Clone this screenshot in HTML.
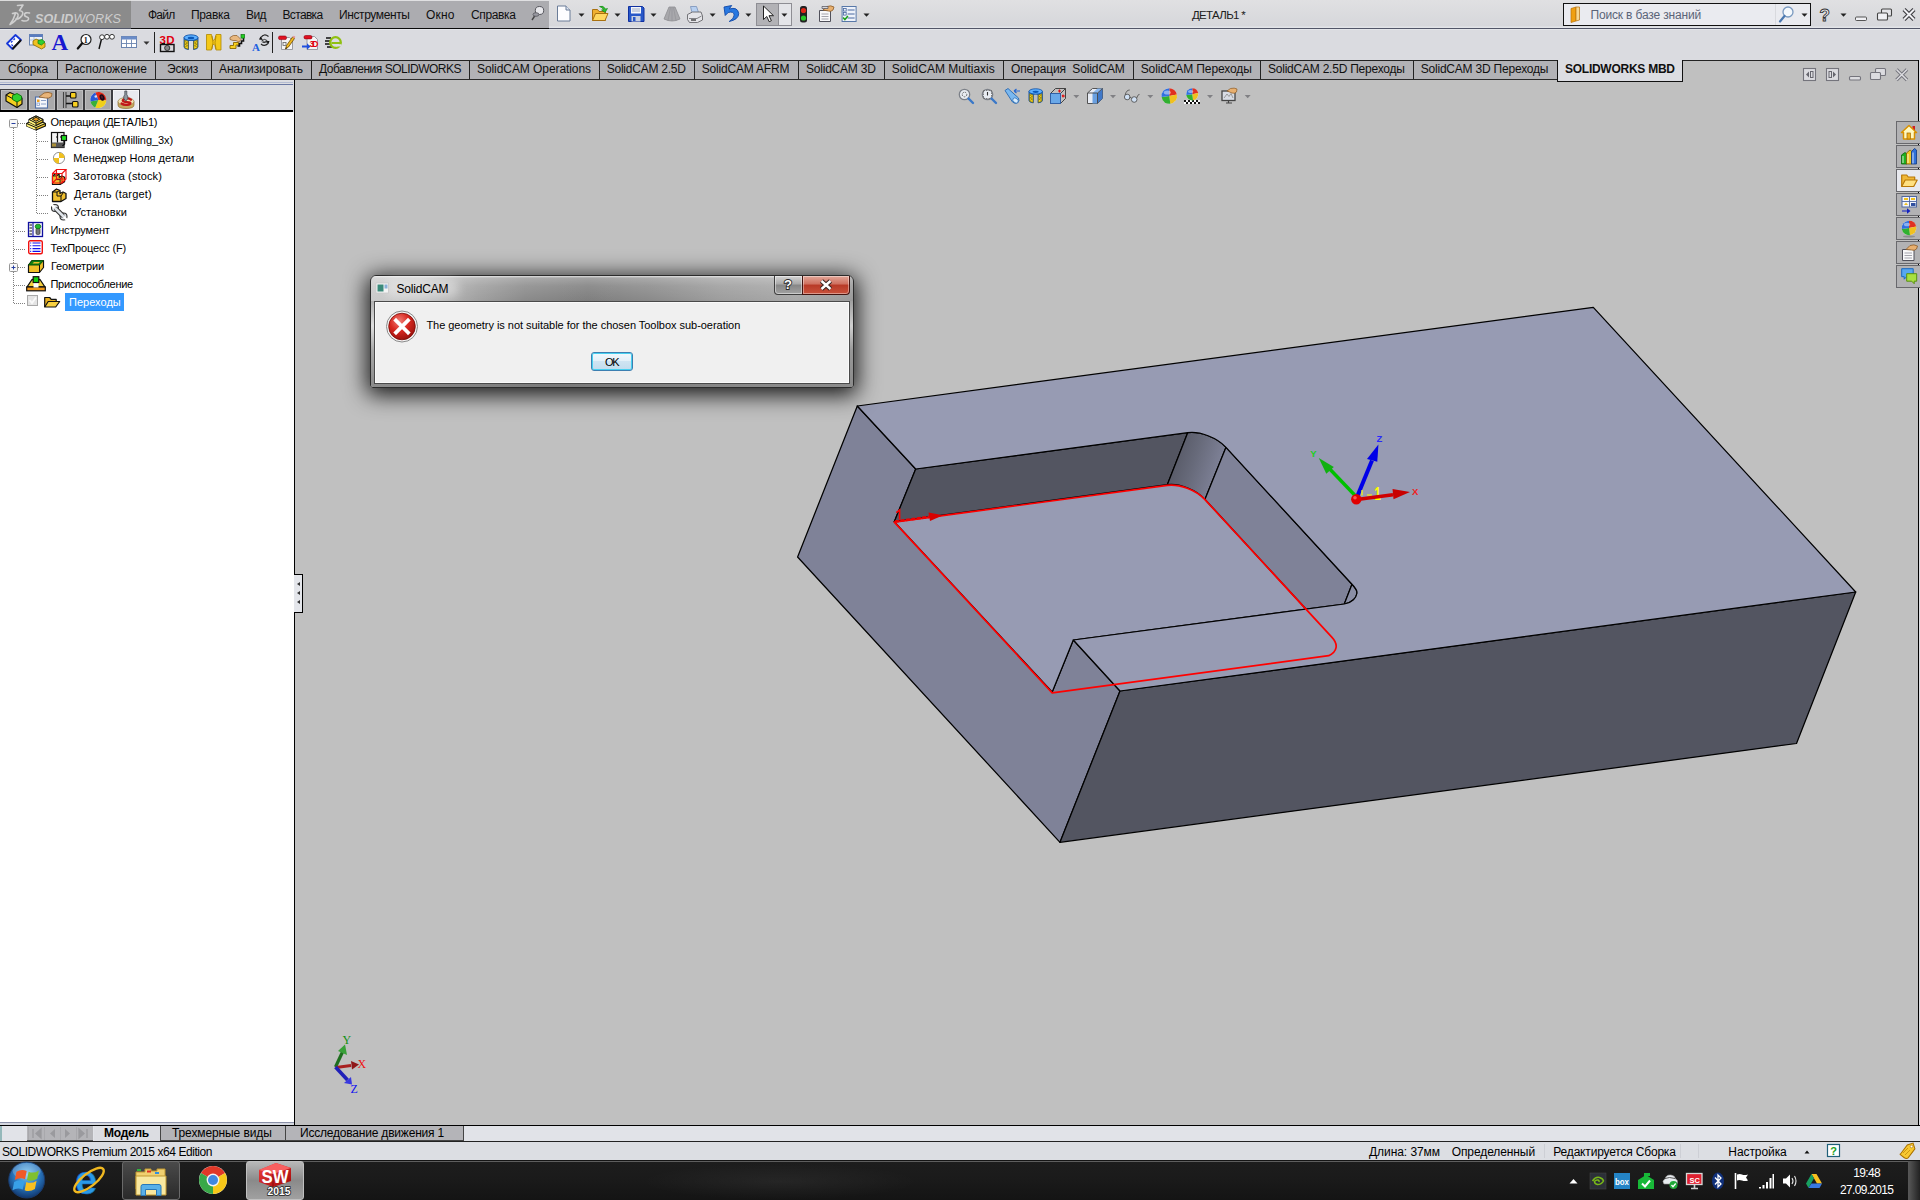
<!DOCTYPE html>
<html><head><meta charset="utf-8"><title>SOLIDWORKS Premium 2015</title>
<style>
*{box-sizing:border-box;margin:0;padding:0}
html,body{width:1920px;height:1200px;overflow:hidden;background:#c0c0c0;font-family:"Liberation Sans",sans-serif;font-size:12px;color:#000}
.a{position:absolute}
.t{position:absolute;white-space:nowrap;line-height:16px;height:16px}
.tab{position:absolute;top:61px;height:19px;border-right:1px solid #222;border-bottom:1px solid #2a2a2a;}
.lt{position:absolute;top:89px;height:21px;width:28px;background:#a9a9ab;border:1px solid #3e3e42;border-bottom:none;box-shadow:inset 0 0 0 1px #bebec0}
.bt{position:absolute;top:1126px;height:15px;background:#b4b4b8;border:1px solid #444;border-top:none}
.rt{position:absolute;left:1896px;width:24px;height:23px;background:#b2b2b4;border:1px solid #68686c;border-right:none}

</style></head><body>
<div class="a" style="left:0;top:0;width:1920px;height:28px;background:linear-gradient(#e0e0e2,#d6d7db 26px,#e2e4e8 27px)"></div>
<div class="a" style="left:131px;top:0;width:418px;height:28px;background:#acacb0;border-top:1px solid #e0e0e2"></div>
<div class="a" style="left:0;top:0;width:131px;height:28px;background:#8b8b8b;border-top:1px solid #dcdcdc"></div>
<div class="a" style="left:0;top:28px;width:1920px;height:1px;background:#525668"></div>
<div class="a" style="left:131px;top:28px;width:418px;height:1px;background:#0a0a0a"></div>
<div class="a" style="left:0;top:29px;width:1920px;height:31px;background:linear-gradient(#e4e6ea 0,#e4e6ea 1px,#dadbe0 1px)"></div>
<div class="a" style="left:0;top:60px;width:1920px;height:1px;background:#222"></div>
<div class="a" style="left:0;top:61px;width:1558px;height:19px;background:#b2b2b6"></div>
<div class="tab" style="left:0px;width:58px"></div>
<div class="tab" style="left:57px;width:99px"></div>
<div class="tab" style="left:155px;width:57px"></div>
<div class="tab" style="left:211px;width:101px"></div>
<div class="tab" style="left:311px;width:159px"></div>
<div class="tab" style="left:469px;width:131px"></div>
<div class="tab" style="left:599px;width:96px"></div>
<div class="tab" style="left:694px;width:105px"></div>
<div class="tab" style="left:798px;width:87px"></div>
<div class="tab" style="left:884px;width:120px"></div>
<div class="tab" style="left:1003px;width:131px"></div>
<div class="tab" style="left:1133px;width:128px"></div>
<div class="tab" style="left:1260px;width:154px"></div>
<div class="tab" style="left:1413px;width:145px"></div>
<div class="a" style="left:1557px;top:60px;width:126px;height:22px;background:#dcdde2;border:1px solid #111;border-top:none"></div>
<div class="a" style="left:0;top:80px;width:295px;height:1046px;background:#dcdde2"></div>
<div class="a" style="left:0;top:82px;width:293px;height:1px;background:#b4bcd2"></div>
<div class="a" style="left:0;top:84px;width:293px;height:1px;background:#6a78a4"></div>
<div class="lt" style="left:0px"></div>
<div class="lt" style="left:28px"></div>
<div class="lt" style="left:56px"></div>
<div class="lt" style="left:84px"></div>
<div class="a" style="left:112px;top:89px;width:28px;height:22px;background:#e9eaef;border:1px solid #3e3e42;border-bottom:none;box-shadow:inset 0 0 0 1px #f6f6f8"></div>
<div class="a" style="left:0;top:110px;width:293px;height:2px;background:#000"></div>
<div class="a" style="left:0;top:112px;width:294px;height:1013px;background:#fff"></div>
<div class="a" style="left:294px;top:80px;width:1px;height:1046px;background:#000"></div>
<svg class="a" style="left:295px;top:80px" width="1623" height="1045" viewBox="295 80 1623 1045">
<defs><linearGradient id="gf1" x1="1172" y1="455" x2="1220" y2="470" gradientUnits="userSpaceOnUse"><stop offset="0" stop-color="#565865"/><stop offset="0.45" stop-color="#676a7a"/><stop offset="1" stop-color="#7f8298"/></linearGradient></defs><g>
<path d="M857.3 406 L915.7 469 L894.3 521.7 L1052.2 692 L1073.3 640 L1120 691 L1060 842.3 L797.6 557 Z" fill="#7f8298" stroke="#000" stroke-width="1.25" stroke-linejoin="round"/>
<path d="M1120 691 L1855.7 592 L1796.5 743.5 L1060 842.3 Z" fill="#535561" stroke="#000" stroke-width="1.25" stroke-linejoin="round"/>
<path d="M894.3 521.7 L1167.3 484.7 C1179.2 483.1 1196.1 489.6 1205 499.3 L1306 609 L1073.3 640 L1052.2 692 Z" fill="#979bb3" stroke="#000" stroke-width="1.25" stroke-linejoin="round"/>
<path d="M915.7 469 L1187.7 432.7 L1167.3 484.7 L894.3 521.7 Z" fill="#535561" stroke="#000" stroke-width="1.25" stroke-linejoin="round"/>
<path d="M1187.7 432.7 C1199.9 431.0 1217.1 437.6 1226 447.3 L1205 499.3 C1196.1 489.6 1179.2 483.1 1167.3 484.7 Z" fill="url(#gf1)" stroke="#000" stroke-width="1.25" stroke-linejoin="round"/>
<path d="M1226 447.3 L1352 584.3 L1344.3 604 L1306 609 L1205 499.3 Z" fill="#7f8298" stroke="#000" stroke-width="1.25" stroke-linejoin="round"/>
<path d="M1352 584.3 C1355.5 588 1357.6 591 1356.9 593.5 C1356.3 597.5 1352.5 602.5 1344.3 604 Z" fill="#8a8ea5" stroke="#000" stroke-width="1.25" stroke-linejoin="round"/>
<path d="M857.3 406 L1593.3 307.3 L1855.7 592 L1120 691 L1073.3 640 L1344.3 604 C1352.5 602.5 1356.3 597.5 1356.9 593.5 C1357.6 591 1355.5 588 1352 584.3 L1226 447.3 C1217.1 437.6 1199.9 431.0 1187.7 432.7 L915.7 469 Z" fill="#979bb3" stroke="#000" stroke-width="1.25" stroke-linejoin="round"/>
<path d="M894.3 522.2 L1167.3 485.3 C1179.2 483.7 1196.1 490.1 1205 499.7 L1332 637.3 C1338.6 644.4 1337.3 651.4 1328.7 655.7 L1052.2 692.8 Z" fill="none" stroke="#ff0000" stroke-width="1.7" stroke-linejoin="round"/>
<path d="M895 521.5 L930 516.8" stroke="#f00000" stroke-width="2.6" stroke-dasharray="4 1.5"/><path d="M928.5 512.5 L943 515.3 L930 521 Z" fill="#d80000"/>
<path d="M896.3 512.6 L899.6 510 L899.6 519.5" stroke="#ff0000" stroke-width="1.6" fill="none"/>
<path d="M1357 497.5 L1330 469.3" stroke="#00c000" stroke-width="3.4"/><path d="M1318.8 458 L1333.8 467 L1326.3 473.8 Z" fill="#10b010"/>
<path d="M1357 497 L1372 460.5" stroke="#0000e8" stroke-width="4"/><path d="M1378.4 444.4 L1377.3 461.8 L1367 459.1 Z" fill="#0000e8"/>
<text x="1374.3" y="500" font-size="19" fill="#ffff00" font-family="Liberation Sans,sans-serif" font-weight="bold" textLength="6.5" lengthAdjust="spacingAndGlyphs">1</text><path d="M1362 490 v5.5 M1367 495 h5" stroke="#ffff00" stroke-width="1.2"/>
<path d="M1357 499.5 L1393 494.8" stroke="#d00000" stroke-width="3.6"/><path d="M1410 492.1 L1393.5 499.2 L1392.5 489 Z" fill="#c80000"/>
<circle cx="1356.3" cy="499.3" r="5.2" fill="#e00000"/><circle cx="1355" cy="497.8" r="1.8" fill="#ff5050"/>
<text x="1376.6" y="442" font-size="9.5" fill="#2828ff" font-family="Liberation Sans,sans-serif" font-weight="bold">Z</text>
<text x="1310.3" y="457" font-size="9.5" fill="#20d020" font-family="Liberation Sans,sans-serif" font-weight="bold">Y</text>
<text x="1412" y="495.2" font-size="9.5" fill="#f02020" font-family="Liberation Sans,sans-serif" font-weight="bold">X</text>
</g></svg>
<div class="a" style="left:294px;top:574px;width:9px;height:39px;background:#e4e6eb;border:1px solid #000;border-left:none"></div>
<div class="a" style="left:297px;top:582.0px;width:0;height:0;border-top:2.5px solid transparent;border-bottom:2.5px solid transparent;border-right:3.5px solid #333"></div>
<div class="a" style="left:297px;top:591.0px;width:0;height:0;border-top:2.5px solid transparent;border-bottom:2.5px solid transparent;border-right:3.5px solid #333"></div>
<div class="a" style="left:297px;top:600.0px;width:0;height:0;border-top:2.5px solid transparent;border-bottom:2.5px solid transparent;border-right:3.5px solid #333"></div>
<div class="a" style="left:65px;top:293px;width:59px;height:18px;background:#3399ff"></div>
<div class="a" style="left:1918px;top:60px;width:1px;height:1066px;background:#000"></div>
<div class="a" style="left:1919px;top:60px;width:1px;height:1066px;background:#dcdde2"></div>
<div class="a" style="left:0;top:1125px;width:1920px;height:1px;background:#000"></div>
<div class="a" style="left:0;top:1126px;width:1920px;height:16px;background:#e1e3e8"></div>
<div class="a" style="left:27px;top:1126px;width:66px;height:15px;background:#b4b4b8;border-bottom:1px solid #555"></div>
<div class="a" style="left:94px;top:1126px;width:67px;height:15px;background:#dcdde2"></div>
<div class="a" style="left:0;top:1126px;width:2px;height:15px;background:#94b8ba"></div>
<div class="a" style="left:0;top:1122px;width:294px;height:1px;background:#8a90a8"></div>
<div class="a" style="left:0;top:1123px;width:294px;height:2px;background:#d4d7df"></div>
<div class="bt" style="left:160px;width:126px"></div><div class="bt" style="left:285px;width:179px"></div>
<div class="a" style="left:0;top:1141px;width:1920px;height:1px;background:#222"></div>
<div class="a" style="left:0;top:1142px;width:1920px;height:18px;background:#dcdee3"></div>
<div class="a" style="left:1544px;top:1144px;width:1px;height:14px;background:#cdcfd5"></div>
<div class="a" style="left:1680px;top:1144px;width:1px;height:14px;background:#cdcfd5"></div>
<div class="a" style="left:1698px;top:1144px;width:1px;height:14px;background:#cdcfd5"></div>
<div class="a" style="left:0;top:1160px;width:1920px;height:40px;background:linear-gradient(#151515 0,#151515 1px,#5e5e5e 1px,#5e5e5e 2px,#1d1d1d 2px,#1a1a1a 50%,#141414)"></div>
<div class="a" style="left:640px;top:1163px;width:280px;height:37px;background:radial-gradient(ellipse at center,rgba(255,255,255,.05),rgba(255,255,255,0) 70%)"></div>
<div class="a" style="left:122px;top:1161px;width:58px;height:39px;border:1px solid #6a6a6a;border-radius:3px;background:linear-gradient(#4a4a4a,#2a2a2a)"></div>
<div class="a" style="left:246px;top:1161px;width:58px;height:39px;border:1px solid #c0c0c0;border-radius:3px;background:linear-gradient(#b8b8b8,#8a8a8a 50%,#a0a0a0)"></div>
<div class="a" style="left:1908px;top:1161px;width:12px;height:39px;border-left:1px solid #555;background:linear-gradient(90deg,#555,#222)"></div>
<div class="rt" style="top:121px;background:#b2b2b4"></div>
<div class="rt" style="top:145px;background:#b2b2b4"></div>
<div class="rt" style="top:169px;background:#e8e9ee"></div>
<div class="rt" style="top:193px;background:#b2b2b4"></div>
<div class="rt" style="top:217px;background:#b2b2b4"></div>
<div class="rt" style="top:241px;background:#b2b2b4"></div>
<div class="rt" style="top:265px;background:#b2b2b4"></div>
<div class="a" style="left:1563px;top:3px;width:248px;height:23px;background:#eaebf0;border:1px solid #111"></div>
<div class="a" style="left:370px;top:275px;width:484px;height:113px;border-radius:6px 6px 3px 3px;background:linear-gradient(90deg,#cacaca 0,#c4c4c4 10%,#a0a0a0 22%,#8a8a8a 32%,#7e7e7e 45%,#8a8a8a 58%,#9c9c9c 72%,#a8a8a8 88%,#9a9a9a 100%);border:1px solid #2c2c2c;box-shadow:0 4px 22px 3px rgba(0,0,0,.88)"></div>
<div class="a" style="left:371px;top:276px;width:482px;height:25px;border-radius:5px 5px 0 0;background:linear-gradient(rgba(255,255,255,.75) 0,rgba(255,255,255,.28) 2px,rgba(255,255,255,.12) 40%,rgba(255,255,255,0) 100%)"></div>
<div class="a" style="left:385px;top:279px;width:74px;height:19px;border-radius:9px;background:rgba(255,255,255,.35);filter:blur(5px)"></div>
<div class="a" style="left:371px;top:301px;width:3px;height:83px;background:linear-gradient(#b0b0b0,#e0e0e0 30%,#a8a8a8 60%,#8c8c8c)"></div>
<div class="a" style="left:850px;top:301px;width:3px;height:83px;background:linear-gradient(#a0a0a0,#d0d0d0 30%,#989898 60%,#8c8c8c)"></div>
<div class="a" style="left:371px;top:384px;width:482px;height:3px;border-radius:0 0 2px 2px;background:linear-gradient(90deg,#8c8c8c,#7a7a7a 40%,#8a8a8a 80%,#8c8c8c)"></div>
<div class="a" style="left:374px;top:301px;width:476px;height:83px;background:#f0f0f0;border:1px solid #4a4a4a;box-shadow:inset 0 0 0 1px #fafafa"></div>
<div class="a" style="left:774px;top:276px;width:29px;height:19px;border:1px solid #3e3e3e;border-top:none;border-radius:0 0 0 4px;background:linear-gradient(#d4d4d4,#a8a8a8 45%,#868686 50%,#a2a2a2);box-shadow:inset 0 0 0 1px rgba(255,255,255,.45)"></div>
<div class="a" style="left:802px;top:276px;width:48px;height:19px;border:1px solid #431410;border-top:none;border-radius:0 0 4px 0;background:linear-gradient(#e2a698,#cf6f5e 45%,#b83a27 50%,#c9523c);box-shadow:inset 0 0 0 1px rgba(255,255,255,.4)"></div>
<div class="a" style="left:591px;top:352px;width:42px;height:19px;border:1px solid #3c7fb1;border-radius:3px;background:linear-gradient(#f2f8fc,#e4f0f8 45%,#cfe4f2 50%,#c2dcee);box-shadow:inset 0 0 0 1px #48d0f0"></div>
<svg class="a" style="left:0;top:0;pointer-events:none" width="1920" height="1200" viewBox="0 0 1920 1200">
<g fill="none" stroke="#cfcfcf" stroke-width="1.6" stroke-linecap="round" stroke-linejoin="round"><path d="M17.5 5.5 L23 5 L19.5 10.5 Q24.5 11.5 22 15.5 Q19 19.5 16 19"/><path d="M12.5 13.5 Q19 11.5 18 16 Q16.5 21 10 24.5 Q13.5 20 15.5 13.5"/><path d="M29.5 13 Q25 12 24.5 14.5 Q24.5 16.5 27 17 Q29.5 17.8 28 20 Q26 21.8 22 20.5"/></g>
<text x="35" y="23" font-size="13.5" font-style="italic" fill="#cdcdcd" font-family="Liberation Sans,sans-serif" textLength="86" lengthAdjust="spacingAndGlyphs"><tspan font-weight="bold">SOLID</tspan>WORKS</text>
<g transform="translate(531 6)"><ellipse cx="8.5" cy="4.5" rx="4.2" ry="4" fill="#e8e8ec" stroke="#55555c" stroke-width="1"/><path d="M5 8 L1 14" stroke="#444" stroke-width="1.4"/><ellipse cx="5" cy="8.5" rx="3" ry="1.8" fill="#9a9aa2" stroke="#55555c" stroke-width=".8"/></g>
<g transform="translate(557 5.5)"><path d="M.5 .5 h8.5 l4 4 v11 h-12.5z" fill="#fdfdff" stroke="#6a7c98"/><path d="M9 .5 v4 h4" fill="#dfe6f2" stroke="#6a7c98"/></g>
<path d="M578.5 13.5 h6 l-3 3.3z" fill="#222"/>
<g transform="translate(592 5)"><path d="M.5 15.5 v-11 h5 l1.5 2 h6.5 v9z" fill="#f0b030" stroke="#a87010"/><path d="M.5 15.5 l3 -7 h12.5 l-3 7z" fill="#ffd860" stroke="#a87010"/><path d="M7.5 1.5 q4 -1.5 6 2.5 l2 -.5 -2.5 4 -3.5 -2.5 2 -.4 q-1.2 -2.2 -4 -3.1z" fill="#30c030" stroke="#108010" stroke-width=".6"/></g>
<path d="M614.5 13.5 h6 l-3 3.3z" fill="#222"/>
<g transform="translate(628 6)"><path d="M.5 .5 h14 l1.5 1.5 v13.5 h-15.5z" fill="#2858c8" stroke="#1030a0"/><rect x="3" y="1" width="10" height="6.5" fill="#f4f6fa"/><path d="M4 3h8M4 5h8" stroke="#8a9ab8" stroke-width=".8"/><rect x="3.5" y="10" width="9" height="5.5" fill="#c8d0e0"/><rect x="5" y="11" width="2.5" height="4" fill="#2858c8"/></g>
<path d="M650.5 13.5 h6 l-3 3.3z" fill="#222"/>
<g transform="translate(664 6)"><path d="M5 1 h6 l5 12 q-8 4 -16 0z" fill="#a8a8ac" stroke="#8e8e92" stroke-width=".8"/><path d="M6.5 1.5 l-2.5 13 M9.5 1.5 l2.5 13 M8 1.5 v13.5" stroke="#949498" stroke-width=".7"/></g>
<g transform="translate(687 6)"><path d="M3.5 .5 h6 l2 6 h-6.5z" fill="#b8d0f0" stroke="#7890b8" stroke-width=".8"/><path d="M.5 8.5 l5 -2.5 h8.5 l1.5 4 v4 l-5 2.5 h-8 l-2 -3z" fill="#e4e4e8" stroke="#68686c" stroke-width=".9"/><path d="M2 12.5 h8 l4.5 -2.5" stroke="#68686c" stroke-width=".8" fill="none"/><path d="M4 14 h5" stroke="#222" stroke-width="1.2"/></g>
<path d="M709.6 13.5 h6 l-3 3.3z" fill="#222"/>
<g transform="translate(723 5)"><path d="M1 2 l1.2 8.5 l3 -3 q5.5 -1.5 6 2.5 q0 3.5 -5 6.5 q9.5 -2 9.5 -8 q-1 -7 -9.5 -4.5 l2.5 -3.5z" fill="#2878e0" stroke="#1048a8" stroke-width=".9" stroke-linejoin="round"/></g>
<path d="M745.4 13.5 h6 l-3 3.3z" fill="#222"/>
<rect x="756.5" y="3.5" width="35" height="22" fill="#e4e5e9" stroke="#8e8e94"/><rect x="757" y="4" width="21" height="21" fill="#b2b2b6"/><path d="M778.5 4 v21" stroke="#8e8e94"/>
<g transform="translate(762 5.5)"><path d="M1.5 .5 v13.5 l3.3 -3 l2.4 5.2 l2.2 -1 l-2.4 -5 h4.5z" fill="#fff" stroke="#222" stroke-width="1" stroke-linejoin="round"/></g>
<path d="M781.4 13.5 h6 l-3 3.3z" fill="#222"/>
<g transform="translate(799.5 6)"><rect x=".5" y="0" width="7" height="16.5" rx="2.5" fill="#222"/><circle cx="4" cy="4.5" r="2.6" fill="#e02818"/><circle cx="4" cy="12" r="2.6" fill="#28c828"/></g>
<g transform="translate(818 5)"><path d="M1.5 5.5 h11 v11 h-11z" fill="#f8f8fa" stroke="#50505a"/><path d="M3.5 9h7M3.5 11.5h7M3.5 14h7" stroke="#9a9aa4" stroke-width=".9"/><path d="M5 5 l4 -3.5 q4 -1.5 7 .5 l-1 3 q-2 2 -4.5 1z" fill="#e8b070" stroke="#8a5a28" stroke-width=".8"/><path d="M4 1.5 h6 v2 h-6z" fill="#d8d8dc" stroke="#50505a" stroke-width=".7"/></g>
<g transform="translate(841.6 6)"><rect x=".5" y=".5" width="14" height="15" fill="#eef2fa" stroke="#5878a8"/><path d="M6 4h7M6 8h7M6 12h7" stroke="#4868a0" stroke-width="1.1"/><rect x="2" y="2.5" width="2.6" height="2.6" fill="none" stroke="#4868a0" stroke-width=".8"/><rect x="2" y="6.5" width="2.6" height="2.6" fill="none" stroke="#4868a0" stroke-width=".8"/><path d="M1.5 11.5 l1.8 2 l3 -3.5" stroke="#18a018" stroke-width="1.5" fill="none"/></g>
<path d="M863.5 13.5 h6 l-3 3.3z" fill="#222"/>
<g transform="translate(1570 7)"><path d="M1 1.5 l5 -1.5 v14 l-5 1.5z" fill="#f0a010" stroke="#b87008" stroke-width=".7"/><path d="M6 0 h3.5 v13 l-3.5 1z" fill="#f8d890" stroke="#b87008" stroke-width=".7"/></g>
<path d="M1775.5 4 v21" stroke="#d8d9de"/>
<g transform="translate(1779 6)"><circle cx="9" cy="6" r="5" fill="#f4f8fc" stroke="#7a9ac0" stroke-width="1.3"/><path d="M5.5 10 L1 15.5" stroke="#4a78b0" stroke-width="2.2" stroke-linecap="round"/></g>
<path d="M1801.5 13.5 h6 l-3 3.3z" fill="#222"/>
<text x="1819.5" y="21" font-size="17" fill="#ececf0" stroke="#333" stroke-width=".9" font-weight="bold" font-family="Liberation Sans,sans-serif">?</text>
<path d="M1840.5 13.5 h6 l-3 3.3z" fill="#222"/>
<rect x="1855.5" y="17" width="11" height="3.5" rx="1" fill="#f0f0f4" stroke="#444" stroke-width=".9"/>
<rect x="1881.5" y="9" width="10" height="7" rx="1" fill="#e4e4e8" stroke="#444" stroke-width="1.1"/><rect x="1877.5" y="13" width="10" height="7" rx="1" fill="#f0f0f4" stroke="#444" stroke-width="1.1"/>
<path d="M1904 9.5 L1914 19.5 M1914 9.5 L1904 19.5" stroke="#3c3c40" stroke-width="4.2"/><path d="M1904 9.5 L1914 19.5 M1914 9.5 L1904 19.5" stroke="#f0f0f4" stroke-width="2"/>
<g transform="translate(6 34)"><path d="M1 9.5 L9.5 1 L15 6 L6.5 15z" fill="#fff" stroke="#1838d8" stroke-width="1.8" stroke-linejoin="round"/><path d="M6.5 15 L15 6" stroke="#111" stroke-width="2"/><path d="M5 8.5 l1.5 -1.5 M7.5 6 l1.5 -1.5 M5.5 10.5 l1.5 1.5" stroke="#1838d8" stroke-width="1.2"/></g>
<g transform="translate(29 34)"><rect x=".5" y=".5" width="13" height="10.5" fill="#eef2f8" stroke="#6a84b0"/><rect x=".5" y=".5" width="13" height="2.5" fill="#5a7cc0"/><path d="M1 6h12M5 3v8" stroke="#9ab0d0" stroke-width=".7"/><path d="M4 7 l3 -2 l9 4 v4 l-3.5 2 l-8.5 -4.5z" fill="#f0c020" stroke="#8a6a00" stroke-width=".8"/><path d="M9 6.5 l4 -1 l3 2.5 l-3.5 3 l-3.5 -1.5z" fill="#30d030" stroke="#108010" stroke-width=".7"/></g>
<text x="51.5" y="50" font-size="23" font-weight="bold" fill="#1818d0" font-family="Liberation Serif,serif">A</text>
<g transform="translate(77 34)"><circle cx="9" cy="5.5" r="5" fill="#fff" stroke="#222" stroke-width="1.2"/><path d="M5 9.5 L.8 14.5" stroke="#111" stroke-width="2.2" stroke-linecap="round"/></g>
<text x="83.8" y="43" font-size="8" font-weight="bold" fill="#111" font-family="Liberation Serif,serif">1</text>
<g transform="translate(98 34)"><path d="M3.5 5 L1 15" stroke="#111" stroke-width="1.4"/><circle cx="4" cy="3.2" r="2.4" fill="#fff" stroke="#222" stroke-width=".9"/><circle cx="9" cy="2.8" r="2.4" fill="#fff" stroke="#222" stroke-width=".9"/><circle cx="14" cy="2.8" r="2.4" fill="#fff" stroke="#222" stroke-width=".9"/></g>
<g transform="translate(121 36)"><rect x=".5" y=".5" width="15" height="11" fill="#fff" stroke="#6a84b0"/><rect x=".5" y=".5" width="15" height="3" fill="#6a8cc8"/><path d="M1 7.5h14M5.5 3.5v8M10.5 3.5v8" stroke="#6a84b0" stroke-width=".9"/></g>
<path d="M143.5 41.5 h6 l-3 3.3z" fill="#333"/>
<path d="M154.5 32 v21" stroke="#222" stroke-width="1"/><path d="M272.5 32 v21" stroke="#222" stroke-width="1"/>
<text x="159.5" y="43.5" font-size="11.5" font-weight="bold" fill="#e00010" font-family="Liberation Sans,sans-serif" textLength="15">3D</text>
<g transform="translate(160 43)"><rect x=".5" y="1.5" width="13.5" height="7" fill="#d8d8dc" stroke="#111" stroke-width="1.4"/><circle cx="7.2" cy="5" r="2.6" fill="#888" stroke="#222" stroke-width=".8"/><rect x="2" y="0" width="3" height="1.5" fill="#111"/></g>
<g transform="translate(183 34)"><path d="M1 3.5 v9.5 q0 2 4.5 2.5 v-9 q2.5 -1 5 0 v9 q4.5 -.5 4.5 -2.5 v-9.5z" fill="#2a88ee" stroke="#0848a0" stroke-width=".8"/><ellipse cx="8" cy="3.6" rx="7" ry="2.8" fill="#5cb0ff" stroke="#0848a0" stroke-width=".8"/><ellipse cx="8" cy="4" rx="3.3" ry="1.2" fill="#0c58b8"/><path d="M1.6 6 l3.6 1.2 v8 l-3.6 -1.4z M14.4 6 l-3.6 1.2 v8 l3.6 -1.4z" fill="#f8d820" stroke="#6a5800" stroke-width=".6"/><path d="M2.2 7.5 l2.3 1.5 -2.3 1.2 2.3 1.5 -2.3 1.2 M13.8 7.5 l-2.3 1.5 2.3 1.2 -2.3 1.5 2.3 1.2" stroke="#6a5800" stroke-width=".6" fill="none"/></g>
<g transform="translate(206 34)"><path d="M.5 .5 h5 q1 6 2 6 q1.5 0 2.5 -6 h5 v15.5 h-5 q-1 -6 -2.5 -6 q-1 0 -2 6 h-5z" fill="#f4c818" stroke="#b08800" stroke-width=".8"/><path d="M6 2 q2 7 0 13 M10 2 q-2 7 0 13" stroke="#a07800" stroke-width=".7" fill="none"/></g>
<g transform="translate(229 34)"><path d="M1 14.5 v-3 h3.5 v-3 h5 v2.5 h-2.5 v3.5z" fill="#f8d020" stroke="#8a6800" stroke-width=".9"/><path d="M8.5 12 h2 v-2.5 h2 v-2.5 h2 v-3" stroke="#111" stroke-width="1.6" fill="none"/><rect x="12" y=".5" width="3.6" height="3.6" fill="#20d020" stroke="#107010" stroke-width=".7"/><path d="M1 3.5 q3 -3 7 -2 l4 4 l-2 2.5 l-3 -1.5 q-3 .5 -6 -1z" fill="#e8b880" stroke="#8a5a28" stroke-width=".7"/></g>
<text x="252" y="50.5" font-size="11" font-weight="bold" fill="#2060e0" font-family="Liberation Serif,serif">A</text>
<g transform="translate(257 33)"><path d="M4 4.5 q3 -4.5 7.5 -1 M11 10.5 q-3.5 3.5 -7 .5" stroke="#222" stroke-width="1.2" fill="none"/><path d="M2 6.5 l4 .5 -2.5 -3.5z M12.5 8 l-4 0 3 3z" fill="#111"/><path d="M4.5 8 q3 -3 5.5 -.5 q-2 3.5 -4.5 1.5 h5" stroke="#333" stroke-width="1" fill="none"/></g>
<g transform="translate(278 34)"><path d="M3.5 3.5 h8 l3 3 v9 h-11z" fill="#f4f4f6" stroke="#88888e" stroke-width=".8"/><rect x=".5" y="2" width="8" height="3.6" rx="1.5" fill="#e01020" stroke="#900010" stroke-width=".6"/><rect x="5" y="8.5" width="3" height="3" fill="none" stroke="#666" stroke-width=".8"/><path d="M7.5 15 l1 -3.5 l6 -8.5 l2 1.5 l-6 8.5z" fill="#f0b820" stroke="#6a4800" stroke-width=".8"/><path d="M14.5 3 l2 1.5 l.8 -1.8 l-1.5 -1z" fill="#e89090"/><path d="M7.5 15 l.5 -1.8 l1 .8z" fill="#111"/></g>
<g transform="translate(302 34)"><path d="M5 2.5 h7.5 l3 3 v10 h-10.5z" fill="#f4f4f6" stroke="#88888e" stroke-width=".8"/><rect x="2" y="1.5" width="8" height="3.4" rx="1.5" fill="#e01020" stroke="#900010" stroke-width=".6"/><path d="M0 11.5 h5 v-2.2 l3.5 3.2 l-3.5 3.2 v-2.2 h-5z" fill="#2050e0"/></g>
<text x="309.5" y="47" font-size="8.5" font-weight="bold" fill="#e00010" font-family="Liberation Sans,sans-serif" textLength="9">3D</text>
<g transform="translate(325 35)"><path d="M1 3h5M0 6h5M0 9h5M2 12h5" stroke="#111" stroke-width="1.3"/><circle cx="10.5" cy="7.5" r="5.3" fill="none" stroke="#90c010" stroke-width="2.3"/><path d="M6.5 8 h8.5" stroke="#90c010" stroke-width="2"/><rect x="11" y="9.2" width="5.5" height="2.3" fill="#dcdde2"/></g>
<g transform="translate(958 88)"><circle cx="6.5" cy="6.5" r="5.2" fill="#e8ecf2" stroke="#7c8088" stroke-width="1.3"/><circle cx="6.5" cy="6.5" r="2.3" fill="none" stroke="#555" stroke-width=".9" stroke-dasharray="1.5 1"/><path d="M10.5 10.5 L15 15" stroke="#3a78c8" stroke-width="2.4" stroke-linecap="round"/></g>
<g transform="translate(981 88)"><circle cx="6.5" cy="6.5" r="5.2" fill="#e8ecf2" stroke="#7c8088" stroke-width="1.3"/><rect x="2.5" y="2.5" width="8" height="8" fill="none" stroke="#666" stroke-width=".8" stroke-dasharray="1.5 1"/><path d="M6.5 4v3.5" stroke="#333" stroke-width="1.1"/><path d="M10.5 10.5 L15 15" stroke="#3a78c8" stroke-width="2.4" stroke-linecap="round"/></g>
<g transform="translate(1004 88)"><path d="M1 2.5 l3 -2 l10.5 9.5 q1.5 3 -1 5 q-3 1 -5 -1z" fill="#7ab8f0" stroke="#2868b0" stroke-width=".9"/><ellipse cx="11.5" cy="12.5" rx="3" ry="2.2" transform="rotate(40 11.5 12.5)" fill="#d8ecfc" stroke="#2868b0" stroke-width=".7"/><path d="M10 3 h6 M10 3 l2.5 -2 M10 3 l2.5 2" stroke="#2868d0" stroke-width="1.2" fill="none"/></g>
<g transform="translate(1028 88) scale(0.96)"><path d="M1 3.5 v9.5 q0 2 4.5 2.5 v-9 q2.5 -1 5 0 v9 q4.5 -.5 4.5 -2.5 v-9.5z" fill="#2a88ee" stroke="#0848a0" stroke-width=".8"/><ellipse cx="8" cy="3.6" rx="7" ry="2.8" fill="#5cb0ff" stroke="#0848a0" stroke-width=".8"/><ellipse cx="8" cy="4" rx="3.3" ry="1.2" fill="#0c58b8"/><path d="M1.6 6 l3.6 1.2 v8 l-3.6 -1.4z M14.4 6 l-3.6 1.2 v8 l3.6 -1.4z" fill="#f8d820" stroke="#6a5800" stroke-width=".6"/><path d="M2.2 7.5 l2.3 1.5 -2.3 1.2 2.3 1.5 -2.3 1.2 M13.8 7.5 l-2.3 1.5 2.3 1.2 -2.3 1.5 2.3 1.2" stroke="#6a5800" stroke-width=".6" fill="none"/></g>
<g transform="translate(1050 88)"><path d="M5.5 .5 h10 v10 l-5 5 M5.5 .5 l-5 5 M15.5 .5 l-5 5" fill="none" stroke="#333" stroke-width=".9"/><rect x=".5" y="5.5" width="10" height="10" fill="#6aa8e8" stroke="#2858a0" stroke-width=".9"/><path d="M8 3 h3 M9.5 1.5 v3 M12 8 h3 M12 8 l1.5 -1.2 M12 8 l1.5 1.2" stroke="#e01010" stroke-width="1.1"/></g>
<path d="M1073.3 95.0 h6 l-3 3.3z" fill="#808084"/>
<g transform="translate(1087 88)"><path d="M.5 5 l5 -4.5 h10 v10 l-5 5 h-10z" fill="#e8ecf4" stroke="#444" stroke-width=".9"/><path d="M5.5 5 h5 v10.5 h-5z" fill="#6aa0e0"/><path d="M10.5 5 l5 -4.5 v10 l-5 5z" fill="#4078c8"/><path d="M5.5 5 l5 -4.5 h5 l-5 4.5z" fill="#8ab8f0"/><path d="M.5 5 h10 v10.5 M10.5 5 l5 -4.5" fill="none" stroke="#444" stroke-width=".9"/></g>
<path d="M1110 95.0 h6 l-3 3.3z" fill="#808084"/>
<g transform="translate(1123.7 89)"><circle cx="3.5" cy="8" r="2.8" fill="#cfe0f4" stroke="#555" stroke-width=".9"/><circle cx="10.5" cy="10.5" r="2.8" fill="#cfe0f4" stroke="#555" stroke-width=".9"/><path d="M6 8.5 q1.5 -.5 2 1 M1.5 6 q1 -5 4.5 -5 M13 9 q2 -5 3 -3" fill="none" stroke="#555" stroke-width=".9"/></g>
<path d="M1147.3 95.0 h6 l-3 3.3z" fill="#808084"/>
<g transform="translate(1161.3 88)"><circle cx="8" cy="8" r="7.8" fill="#e8e8e8"/><path d="M8 8 L8 .2 A7.8 7.8 0 0 1 15.6 6.5z" fill="#e03020"/><path d="M8 8 L15.6 6.5 A7.8 7.8 0 0 1 9 15.8z" fill="#f0c020"/><path d="M8 8 L9 15.8 A7.8 7.8 0 0 1 .3 9z" fill="#30b030"/><path d="M8 8 L.3 9 A7.8 7.8 0 0 1 8 .2z" fill="#3070e0"/><ellipse cx="6" cy="4.5" rx="3.5" ry="2" fill="#fff" opacity=".45"/></g>
<g transform="translate(1184 96)"><path d="M0 4 h16 v4 h-16z" fill="#fff"/><path d="M0 4h2v2h-2zM4 4h2v2h-2zM8 4h2v2h-2zM12 4h2v2h-2zM2 6h2v2h-2zM6 6h2v2h-2zM10 6h2v2h-2zM14 6h2v2h-2z" fill="#111"/></g>
<g transform="translate(1186 88) scale(0.78)"><circle cx="8" cy="8" r="7.8" fill="#e8e8e8"/><path d="M8 8 L8 .2 A7.8 7.8 0 0 1 15.6 6.5z" fill="#e03020"/><path d="M8 8 L15.6 6.5 A7.8 7.8 0 0 1 9 15.8z" fill="#f0c020"/><path d="M8 8 L9 15.8 A7.8 7.8 0 0 1 .3 9z" fill="#30b030"/><path d="M8 8 L.3 9 A7.8 7.8 0 0 1 8 .2z" fill="#3070e0"/><ellipse cx="6" cy="4.5" rx="3.5" ry="2" fill="#fff" opacity=".45"/></g>
<path d="M1207 95.0 h6 l-3 3.3z" fill="#808084"/>
<g transform="translate(1221 88)"><rect x="1" y="3" width="13" height="9.5" fill="#d8dce4" stroke="#444" stroke-width="1.3"/><path d="M3 10 l3 -4 2 2.5 2 -3 2 4.5" stroke="#888" fill="none" stroke-width=".8"/><path d="M5 15 h6 M7.5 12.5 v2.5" stroke="#444" stroke-width="1.2"/><path d="M6 3 l3.5 -2.5 q4 -1 6.5 .5 l-.5 3 q-2 2 -4.5 1z" fill="#e8b070" stroke="#8a5a28" stroke-width=".7"/></g>
<path d="M1244.7 95.0 h6 l-3 3.3z" fill="#808084"/>
<g transform="translate(5 92)"><path d="M1 3 l4 -2.5 l12 5.5 v6 l-5 3.5 l-11 -6.5z" fill="#f4d020" stroke="#111" stroke-width="1.2" stroke-linejoin="round"/><path d="M1 3 l11 6 l5 -3 M12 9 v6.5" stroke="#111" stroke-width="1" fill="none"/><path d="M7.5 3.5 l4.5 -2 l4.5 2.5 v3.5 l-4.5 2.5 l-4.5 -2.5z" fill="#30d030" stroke="#0a700a" stroke-width=".9"/></g>
<g transform="translate(34 91)"><rect x="1.5" y="6" width="12" height="11" fill="#f4f6fa" stroke="#5070a8" stroke-width="1.1"/><rect x="3" y="8.5" width="2.5" height="2.5" fill="#f0a020"/><path d="M7 9.5h5M7 13h5" stroke="#8aa0c8" stroke-width="1.2"/><rect x="3" y="12" width="2.5" height="2.5" fill="none" stroke="#8aa0c8" stroke-width=".8"/><path d="M5 6 l5 -4 q4 -1.5 8 .5 l-.5 3 q-3 2.5 -6 1.5z" fill="#e8b478" stroke="#8a5a28" stroke-width=".8"/></g>
<g transform="translate(62 91)"><path d="M1.5 1 v16 M4 1 v16" stroke="#444" stroke-width="1.1"/><path d="M4 5 h5 M4 12.5 h6" stroke="#111" stroke-width="1.3"/><rect x="8.5" y="1.5" width="5.5" height="5.5" rx="1" fill="#f8d020" stroke="#111" stroke-width="1.1"/><rect x="10.5" y="10.5" width="5.5" height="5.5" rx="1" fill="#f8d020" stroke="#111" stroke-width="1.1"/></g>
<g transform="translate(90.3 92)"><circle cx="8" cy="8" r="8" fill="#e8e8e8"/><path d="M8 8 L5 .6 A8 8 0 0 1 16 8.5z" fill="#e02818"/><path d="M8 8 L16 8.5 A8 8 0 0 1 5 15.4z" fill="#f0d018"/><path d="M8 8 L5 15.4 A8 8 0 0 1 .2 9.5z" fill="#38b038"/><path d="M8 8 L.2 9.5 A8 8 0 0 1 5 .6z" fill="#2858d8"/><ellipse cx="11.8" cy="5.5" rx="2.3" ry="3.3" transform="rotate(-25 11.8 5.5)" fill="#180818"/><ellipse cx="11.6" cy="5.2" rx="1" ry="1.7" transform="rotate(-25 11.6 5.2)" fill="#501828"/><circle cx="5.5" cy="4.5" r="1.3" fill="#fff" opacity=".8"/></g>
<g transform="translate(117.5 91)"><path d="M.5 10.5 v3.5 q0 3.5 8 3.5 q8 0 8 -3.5 v-3.5z" fill="#c8a860" stroke="#806020" stroke-width=".6"/><ellipse cx="8.5" cy="10.5" rx="8" ry="4" fill="#f0e2b4" stroke="#907840" stroke-width=".6"/><path d="M13.5 8.8 q-2 -2 -5.5 -1.2 q-3.5 1 -2.5 2.5 q1 1.2 4 1 q3.5 0 3.5 1.2 q0 1.3 -3.5 1.5 q-3.5 .2 -5.5 -1.3" stroke="#c01818" stroke-width="2.3" fill="none" stroke-linecap="round"/><path d="M7.3 0 h2 v4 l1 1 v2.5 l-2 2.7 l-2 -2.7 v-2.5 l1 -1z" fill="#9098a0" stroke="#404448" stroke-width=".7"/></g>
<path d="M13.5 128 V303.5" stroke="#808080" stroke-width="1" stroke-dasharray="1 1"/>
<path d="M36.5 130 V213.5" stroke="#808080" stroke-width="1" stroke-dasharray="1 1"/>
<path d="M18 123.5 H26" stroke="#808080" stroke-width="1" stroke-dasharray="1 1"/>
<path d="M37 141.5 H49" stroke="#808080" stroke-width="1" stroke-dasharray="1 1"/>
<path d="M37 159.5 H49" stroke="#808080" stroke-width="1" stroke-dasharray="1 1"/>
<path d="M37 177.5 H49" stroke="#808080" stroke-width="1" stroke-dasharray="1 1"/>
<path d="M37 195.5 H49" stroke="#808080" stroke-width="1" stroke-dasharray="1 1"/>
<path d="M37 213.5 H49" stroke="#808080" stroke-width="1" stroke-dasharray="1 1"/>
<path d="M14 231.5 H26" stroke="#808080" stroke-width="1" stroke-dasharray="1 1"/>
<path d="M14 249.5 H26" stroke="#808080" stroke-width="1" stroke-dasharray="1 1"/>
<path d="M14 285.5 H26" stroke="#808080" stroke-width="1" stroke-dasharray="1 1"/>
<path d="M14 303.5 H26" stroke="#808080" stroke-width="1" stroke-dasharray="1 1"/>
<path d="M18 267.5 H26" stroke="#808080" stroke-width="1" stroke-dasharray="1 1"/>
<rect x="9.5" y="119.5" width="8" height="8" rx="1" fill="#f8f8f8" stroke="#969696"/><path d="M11.5 123.5 h4" stroke="#2840a0" stroke-width="1"/>
<rect x="9.5" y="263.5" width="8" height="8" rx="1" fill="#f8f8f8" stroke="#969696"/><path d="M11.5 267.5 h4 M13.5 265.5 v4" stroke="#2840a0" stroke-width="1"/>
<g transform="translate(26 114)"><path d="M.6 9.5 L10 5.5 L19.4 9.5 V12 L10 16 L.6 12z" fill="#f0c828" stroke="#111" stroke-width="1.2" stroke-linejoin="round"/><path d="M.6 9.5 L10 13.5 V16 L.6 12z" fill="#fff27a"/><path d="M.6 9.5 L10 5.5 L19.4 9.5 L10 13.5z" fill="#fff27a" stroke="#111" stroke-width="1"/><path d="M10 13.5 V16" stroke="#111" stroke-width="1"/><path d="M3 5.5 L10 2 L17 5.5 V8 L10 11.5 L3 8z" fill="#f0c828" stroke="#111" stroke-width="1.2" stroke-linejoin="round"/><path d="M3 5.5 L10 9 V11.5 L3 8z" fill="#fff27a"/><path d="M3 5.5 L10 2 L17 5.5 L10 9z" fill="#fff27a" stroke="#111" stroke-width="1"/><path d="M10 9 V11.5" stroke="#111" stroke-width="1"/><path d="M6.3 5.3 L10 3.3 L13.7 5.3 L10 7.3z" fill="#f09a18" stroke="#111" stroke-width=".9"/></g>
<g transform="translate(51 132)"><rect x=".5" y=".5" width="12.5" height="15" fill="#f4f4f4" stroke="#111" stroke-width="1.2"/><rect x=".5" y="10.5" width="12.5" height="5" fill="#555"/><path d="M2 11.5v3M4 11.5v3" stroke="#f0c020" stroke-width="1.1"/><path d="M6.5 .5 v10 M6.5 5 h-1.5 M9 5 h2" stroke="#111" stroke-width="1.2"/><rect x="10.5" y="3.5" width="5" height="5" fill="#20e020" stroke="#111" stroke-width="1.2"/><path d="M13.5 9 v3 l-2 2" stroke="#111" stroke-width="1.4" fill="none"/></g>
<g transform="translate(53 152)"><circle cx="6" cy="6" r="5.6" fill="#fff" stroke="#888" stroke-width=".9"/><path d="M6 6 V.4 A5.6 5.6 0 0 1 11.6 6z M6 6 V11.6 A5.6 5.6 0 0 1 .4 6z" fill="#f0c020"/></g>
<g transform="translate(52 169)"><g transform="translate(0 2) scale(0.9)"><path d="M.5 5.5 l4 -3 l3.5 1.5 v3 l3 -1.5 l3 1.5 v5 l-5 3 h-8.5z" fill="#f0c030" stroke="#111" stroke-width="1.3" stroke-linejoin="round"/><path d="M.5 5.5 h4.5 v4 h4 M5 5.5 l3 -1.5 M9 9.5 l2 -3 M9 9.5 v5.5" fill="none" stroke="#111" stroke-width="1"/></g><path d="M.5 4.5 h9.5 v9.5 h-9.5z M.5 4.5 l4 -4 h9.5 l-4 4 M14 .5 v9.5 l-4 4 M4.5 .5 v9.5 h9.5 M4.5 10 l-4 4" fill="none" stroke="#f01010" stroke-width="1.1"/></g>
<g transform="translate(52 186.5)"><path d="M.5 5.5 l4 -3 l3.5 1.5 v3 l3 -1.5 l3 1.5 v5 l-5 3 h-8.5z" fill="#f0c030" stroke="#111" stroke-width="1.3" stroke-linejoin="round"/><path d="M.5 5.5 h4.5 v4 h4 M5 5.5 l3 -1.5 M9 9.5 l2 -3 M9 9.5 v5.5" fill="none" stroke="#111" stroke-width="1"/></g>
<g transform="translate(51 204)"><g stroke-linecap="round"><circle cx="4" cy="4" r="3.5" fill="#dfe4ea" stroke="#333" stroke-width="1.1"/><circle cx="12.5" cy="12.5" r="3.5" fill="#dfe4ea" stroke="#333" stroke-width="1.1"/><path d="M5.5 5.5 L11 11" stroke="#333" stroke-width="4.8"/><path d="M4.5 4.5 L12 12" stroke="#dfe4ea" stroke-width="2.8"/><path d="M.6 .6 L3.6 3.6 M16 16 L13 13" stroke="#fff" stroke-width="2.4" stroke-linecap="butt"/></g></g>
<g transform="translate(28 222)"><rect x=".5" y=".5" width="14" height="14" fill="#f8f8fc" stroke="#1010a0" stroke-width="1.3"/><path d="M5 .5 v14" stroke="#1010a0" stroke-width="1.1"/><path d="M1.5 3h2.5M1.5 6h2.5M1.5 9h2.5M1.5 12h2.5" stroke="#111" stroke-width="1"/><rect x="8" y="6" width="4" height="6.5" rx="1.5" fill="#777" stroke="#333" stroke-width=".7"/><ellipse cx="10" cy="4.5" rx="2.8" ry="2.3" fill="#20b830" stroke="#0a6010" stroke-width=".7"/></g>
<g transform="translate(28 240)"><rect x=".7" y=".7" width="13.6" height="13" rx="1.5" fill="#fff" stroke="#f01010" stroke-width="1.4"/><path d="M4.5 3h8M4.5 5.8h8M4.5 8.6h8M4.5 11.4h8" stroke="#1010f0" stroke-width="1.1"/><path d="M2.2 3h1M2.2 5.8h1M2.2 8.6h1M2.2 11.4h1" stroke="#1010f0" stroke-width="1.1"/></g>
<g transform="translate(28 260)"><path d="M.5 5 l3.5 -4.5 h11.5 v7 l-4 5 h-11z" fill="#f0c028" stroke="#111" stroke-width="1.2" stroke-linejoin="round"/><path d="M.5 5 l3.5 -4.5 h11.5 l-4 4.5z" fill="#108010" stroke="#0a500a" stroke-width="1"/><path d="M4.5 3.5 l1.5 -1.5 h6 l-1.5 1.5z" fill="#f0c028"/><path d="M11.5 5 v7.5" stroke="#111" stroke-width="1"/></g>
<g transform="translate(26 276)"><path d="M1 11 l5 -7.5 h8 l5 7.5z" fill="#f4d040" stroke="#111" stroke-width="1.3" stroke-linejoin="round"/><rect x=".7" y="11" width="18.6" height="3.8" fill="#f09818" stroke="#111" stroke-width="1.2"/><rect x="7.5" y="6.5" width="5" height="5" fill="#fff"/><rect x="7.2" y=".7" width="5.6" height="5.8" fill="#10d010" stroke="#111" stroke-width="1.2"/></g>
<rect x="27.5" y="295.5" width="10" height="10" fill="#e4e4e4" stroke="#a8a8a8"/><path d="M29.5 300 l2.5 3 l4 -5.5" stroke="#fafafa" stroke-width="1.8" fill="none"/>
<g transform="translate(44 296.5)"><path d="M.7 10.5 v-9.5 h5 l1.5 1.8 h5 v2.5" fill="#e8b020" stroke="#111" stroke-width="1.2" stroke-linejoin="round"/><path d="M.7 10.5 l3.5 -5.5 h11.5 l-4 5.5z" fill="#f8d040" stroke="#111" stroke-width="1.2" stroke-linejoin="round"/></g>
<rect x="376" y="283" width="12.5" height="10" fill="#f4f4f4" stroke="#c8c8c8" stroke-width=".8"/><rect x="377.5" y="284.5" width="6" height="7" fill="#3a8a7a"/><rect x="384.5" y="284.5" width="3" height="4" fill="#8ab0d8"/>
<text x="784" y="289.3" font-size="13" font-weight="bold" fill="#fff" stroke="#2a2a2a" stroke-width="1.8" paint-order="stroke" font-family="Liberation Sans,sans-serif">?</text>
<path d="M821.5 281 L830.5 289 M830.5 281 L821.5 289" stroke="#3a2622" stroke-width="4.6"/><path d="M821.5 281 L830.5 289 M830.5 281 L821.5 289" stroke="#fff" stroke-width="2.4"/>
<defs><radialGradient id="er" cx=".4" cy=".3" r=".8"><stop offset="0" stop-color="#f08078"/><stop offset=".45" stop-color="#d82820"/><stop offset="1" stop-color="#8c0c08"/></radialGradient></defs>
<circle cx="402" cy="326.5" r="15.5" fill="#f4f4f4" stroke="#8a8a8a" stroke-width="1"/><circle cx="402" cy="326.5" r="13.3" fill="url(#er)" stroke="#7a0c08" stroke-width=".8"/><path d="M396 320.5 L408 332.5 M408 320.5 L396 332.5" stroke="#fff" stroke-width="3.8" stroke-linecap="square"/>
<g transform="translate(1901 124)"><path d="M11.5 2 h2.5 v5 h-2.5z" fill="#d02020"/><path d="M.5 8.5 L8 1.5 L15.5 8.5 h-2 v6.5 h-11 v-6.5z" fill="#fff8c0" stroke="#d89000" stroke-width="1.5" stroke-linejoin="round"/><rect x="6" y="9" width="3.5" height="6" fill="#f0b020" stroke="#a06800" stroke-width=".7"/></g>
<g transform="translate(1901 148)"><path d="M.5 7 l3.5 -2.5 l2 1.5 v10 h-5.5z" fill="#20b020" stroke="#0a600a" stroke-width=".8"/><path d="M5.5 5 l3.5 -3 l2 1.5 v12.5 h-5.5z" fill="#f0c820" stroke="#806000" stroke-width=".8"/><path d="M10.5 3.5 l3 -3 l2 1.5 v14 h-5z" fill="#3070d8" stroke="#103880" stroke-width=".8"/><path d="M2 8v7M7 6v9M12 4.5v11" stroke="#fff" stroke-width="1" opacity=".8"/></g>
<g transform="translate(1901 173)"><path d="M.7 13.5 v-11.5 h5 l1.5 2 h6.5 v3" fill="#f0b838" stroke="#b87808" stroke-width="1.2" stroke-linejoin="round"/><path d="M.7 13.5 l3.5 -6.5 h12 l-3.5 6.5z" fill="#ffe080" stroke="#b87808" stroke-width="1.2" stroke-linejoin="round"/></g>
<g transform="translate(1901 196)"><rect x="1" y=".5" width="14.5" height="10.5" fill="#f4f6fc" stroke="#5068a0" stroke-width="1"/><path d="M8.5 .5 v10.5 M1 5.5 h14.5" stroke="#5068a0" stroke-width=".9"/><rect x="3" y="2" width="4" height="2" fill="#f0c020"/><rect x="10" y="2" width="4" height="2" fill="#f0c020"/><path d="M3 9 l2 -2.5 l2 2.5z" fill="#f0c020"/><rect x="10" y="7" width="4.5" height="3" fill="#3050a0"/><path d="M1 14.5 h5 v-2.2 l3.5 2.7 l-3.5 2.7 v-2.2 h-5z" fill="#1020c0"/></g>
<g transform="translate(1901.5 220.5)"><circle cx="7.5" cy="7.5" r="7.3" fill="#e8e8e8"/><path d="M7.5 7.5 L7.5 .2 A7.3 7.3 0 0 1 14.7 6z" fill="#e03020"/><path d="M7.5 7.5 L14.7 6 A7.3 7.3 0 0 1 8.5 14.7z" fill="#f0c020"/><path d="M7.5 7.5 L8.5 14.7 A7.3 7.3 0 0 1 .3 8.5z" fill="#30b030"/><path d="M7.5 7.5 L.3 8.5 A7.3 7.3 0 0 1 7.5 .2z" fill="#3070e0"/><ellipse cx="5.5" cy="4" rx="3.2" ry="1.8" fill="#fff" opacity=".45"/><ellipse cx="7.5" cy="16" rx="6" ry="1" fill="#555" opacity=".4"/></g>
<g transform="translate(1901 244)"><path d="M1.5 5.5 h11.5 v11 h-11.5z" fill="#f8f8fa" stroke="#50505a"/><path d="M3.5 9h7.5M3.5 11.5h7.5M3.5 14h7.5" stroke="#9a9aa4" stroke-width=".9"/><path d="M5 5.5 l4 -4 q4 -1.5 7.5 .5 l-1 3 q-2 2 -5 1z" fill="#e8b070" stroke="#8a5a28" stroke-width=".8"/></g>
<g transform="translate(1901 268)"><path d="M.7 .7 h11.5 v8 h-6.5 l-2.5 2.5 v-2.5 h-2.5z" fill="#58a8f0" stroke="#1868c0" stroke-width="1"/><path d="M5.7 5.7 h10 v7.5 h-2.5 v2.5 l-2.5 -2.5 h-5z" fill="#a8e040" stroke="#589010" stroke-width="1"/></g>
<rect x="1803.5" y="68.5" width="12" height="12" fill="#dcdce0" stroke="#74747c" stroke-width="1.1"/><path d="M1809 71.5 l-3 3 l3 3z" fill="#66666e"/><rect x="1810.5" y="71.5" width="2.5" height="6" fill="none" stroke="#66666e" stroke-width="1"/>
<rect x="1826.5" y="68.5" width="12" height="12" fill="#dcdce0" stroke="#74747c" stroke-width="1.1"/><path d="M1833 71.5 l3 3 l-3 3z" fill="#66666e"/><rect x="1829" y="71.5" width="2.5" height="6" fill="none" stroke="#66666e" stroke-width="1"/>
<rect x="1849.5" y="76.5" width="11" height="3.5" rx="1" fill="#dcdce0" stroke="#74747c" stroke-width="1.1"/>
<rect x="1875.5" y="68.5" width="10" height="7" rx="1" fill="#dcdce0" stroke="#74747c" stroke-width="1.1"/><rect x="1870.5" y="72.5" width="10" height="7" rx="1" fill="#dcdce0" stroke="#74747c" stroke-width="1.1"/>
<path d="M1896.5 69.5 L1907 80 M1907 69.5 L1896.5 80" stroke="#74747c" stroke-width="3.4"/><path d="M1896.5 69.5 L1907 80 M1907 69.5 L1896.5 80" stroke="#dcdce0" stroke-width="1.5"/>
<path d="M28.5 1127 v13" stroke="#a8a8ac"/>
<path d="M44.5 1127 v13" stroke="#a8a8ac"/>
<path d="M60.5 1127 v13" stroke="#a8a8ac"/>
<path d="M76.5 1127 v13" stroke="#a8a8ac"/>
<path d="M33 1129 v9 M41 1129 l-5 4.5 l5 4.5z" stroke="#9a9a9e" fill="#9a9a9e" stroke-width="1.3"/>
<path d="M55 1129 l-5 4.5 l5 4.5z" fill="#9a9a9e"/>
<path d="M65 1129 l5 4.5 l-5 4.5z" fill="#9a9a9e"/>
<path d="M87 1129 v9 M79 1129 l5 4.5 l-5 4.5z" stroke="#9a9a9e" fill="#9a9a9e" stroke-width="1.3"/>
<path d="M1804.5 1153.5 h5 l-2.5 -3z" fill="#111"/>
<rect x="1827.5" y="1144.5" width="12" height="12" fill="#fff" stroke="#20607a" stroke-width="1.2"/>
<text x="1830.3" y="1155" font-size="11" font-weight="bold" fill="#20a020" font-family="Liberation Sans,sans-serif">?</text>
<g transform="translate(1899 1142)"><path d="M1 11 l8 -8 l6 -1 l1 6 l-8 8 q-2 1 -4 -1 l-3 -3 q-1 -1 0 -1z" fill="#f8c830" stroke="#a87000" stroke-width="1" transform="rotate(-8 8 8)"/><circle cx="12.5" cy="4.5" r="1.3" fill="#fff" stroke="#a87000" stroke-width=".6"/><path d="M4 11 l5 -5 M6 13 l5 -5" stroke="#c89010" stroke-width=".9"/></g>
<path d="M335.5 1067 L342.5 1052" stroke="#1e6e1e" stroke-width="3.2"/><path d="M345 1044.5 L347 1055 L338 1051z" fill="#38a038"/>
<path d="M336 1067.5 L351 1065.5" stroke="#a82020" stroke-width="3.2"/><path d="M359 1064.5 L351 1061 L352 1069.5z" fill="#901818"/>
<path d="M335.5 1067 L347.5 1080" stroke="#2020b8" stroke-width="3.6"/><path d="M352 1084.5 L351 1077 L344 1083z" fill="#3838e0"/>
<text x="342.5" y="1044" font-size="12" fill="#109010" font-family="Liberation Serif,serif">Y</text><text x="357.5" y="1068" font-size="12" fill="#f01010" font-family="Liberation Serif,serif">X</text><text x="350.5" y="1093" font-size="12" fill="#1010f0" font-family="Liberation Serif,serif">Z</text>
<defs><radialGradient id="orb" cx=".5" cy=".35" r=".7"><stop offset="0" stop-color="#7ac8f4"/><stop offset=".5" stop-color="#2a78c0"/><stop offset="1" stop-color="#0c2c60"/></radialGradient><linearGradient id="swr" x1="0" y1="0" x2="1" y2="1"><stop offset="0" stop-color="#f04040"/><stop offset="1" stop-color="#a00808"/></linearGradient></defs>
<circle cx="26.7" cy="1180" r="18" fill="url(#orb)" stroke="#1a3a6a" stroke-width="1"/><ellipse cx="26.7" cy="1171" rx="14" ry="8" fill="#fff" opacity=".22"/>
<g transform="translate(26.7 1180) scale(1.28) translate(-25.5 -1180)"><path d="M17.5 1173.5 q4 -2.5 8 -.5 l-1.3 6.5 q-4 -2 -8 .5z" fill="#f05a28"/><path d="M27 1173.5 q4 1.8 8 -1 l-1.300 6.5 q-4 2.700 -8 1z" fill="#80c030"/><path d="M15.700 1181.5 q4 -2.5 8 -.5 l-1.300 6.5 q-4 -2 -8 .5z" fill="#38a0e8"/><path d="M25.200 1181.5 q4 1.800 8 -1 l-1.300 6.5 q-4 2.700 -8 1z" fill="#f8c020"/></g>
<text x="75" y="1194" font-size="40" font-weight="bold" fill="#2a9ae8" stroke="#1060b0" stroke-width=".6" font-family="Liberation Sans,sans-serif">e</text>
<ellipse cx="89" cy="1180" rx="18" ry="6.5" transform="rotate(-38 89 1180)" fill="none" stroke="#f0b820" stroke-width="2.4"/>
<g transform="translate(135 1167)"><path d="M1 5 h9 v-3 h6 v2 h6 v-2 h8 v20 h-29z" fill="#f0d070" stroke="#c09830" stroke-width="1"/><rect x="2" y="2" width="4" height="2" fill="#30b040"/><rect x="12" y="3.5" width="4" height="2" fill="#e03020"/><rect x="20" y="5" width="4" height="2" fill="#3090e0"/><path d="M1 9 h30 v19 h-30z" fill="#f8e8a0" stroke="#c09830" stroke-width="1"/><path d="M6 28.5 v-9 q0 -2 2 -2 h16 q2 0 2 2 v9 h-4.5 v-6 h-11 v6z" fill="#58b0e8" stroke="#2878b8" stroke-width="1"/></g>
<circle cx="213" cy="1180" r="14" fill="#e8e8e8"/><path d="M213 1180 L200.9 1173 A14 14 0 0 1 225.1 1173z" fill="#e03828"/><path d="M213 1180 L225.1 1173 A14 14 0 0 1 213 1194z" fill="#f8c818"/><path d="M213 1180 L213 1194 A14 14 0 0 1 200.9 1173z" fill="#38a848"/><circle cx="213" cy="1180" r="6.4" fill="#f4f4f4"/><circle cx="213" cy="1180" r="5" fill="#4088e0"/>
<g transform="translate(259 1163)"><path d="M0 7 L17 0 L32 5 L32 18 L14 24 L0 19z" fill="url(#swr)"/><path d="M0 7 L17 0 L32 5 L14 11z" fill="#f86060"/><path d="M14 11 L14 24" stroke="#800808" stroke-width=".8"/></g>
<text x="261.5" y="1183" font-size="19" font-weight="bold" fill="#fff" font-family="Liberation Sans,sans-serif" textLength="27" lengthAdjust="spacingAndGlyphs">SW</text>
<text x="267.5" y="1194.5" font-size="11" font-weight="bold" fill="#fff" stroke="#222" stroke-width="1.6" paint-order="stroke" font-family="Liberation Sans,sans-serif" textLength="23" lengthAdjust="spacingAndGlyphs">2015</text>
<path d="M1569.5 1183.5 h8 l-4 -4.5z" fill="#fff"/>
<g transform="translate(1590 1173)"><rect width="16" height="16" fill="#2c3038" stroke="#444" stroke-width=".6"/><path d="M2.5 8 q3 -4.5 7 -3.5 q3.5 1 4 3.5 q-2 3.5 -6 3.5 q-3 -.5 -3 -3 q1.5 -2 3.5 -1.5 q1.5 .5 1 2" fill="none" stroke="#78b818" stroke-width="1.5"/></g>
<g transform="translate(1614 1173)"><rect width="16" height="16" fill="#2484c6"/></g>
<text x="1615" y="1184.5" font-size="8.5" font-weight="bold" fill="#fff" font-family="Liberation Sans,sans-serif" textLength="14" lengthAdjust="spacingAndGlyphs">box</text>
<g transform="translate(1638 1173)"><path d="M0 7 l8 -5 l8 5 v9 h-16z" fill="#18b838"/><path d="M6 0 h6 v3 h-4 v3 h-2z" fill="#18b838"/><path d="M4 10.5 l3 3 l5 -6" stroke="#fff" stroke-width="2" fill="none"/></g>
<g transform="translate(1662 1173)"><path d="M2 11 q-2.5 -3 1 -5 q1 -4.5 6 -4 q4 .5 4.5 4 q3 1 1.5 5z" fill="#e8ecf0" stroke="#999" stroke-width=".6"/><path d="M3 5.5 q4 -2 10 0" stroke="#555" stroke-width="1" fill="none"/><circle cx="11.5" cy="12" r="4" fill="#20a838"/><path d="M9.5 12 l1.5 1.7 l2.7 -3.2" stroke="#fff" stroke-width="1.3" fill="none"/></g>
<g transform="translate(1686 1173)"><rect x=".5" y=".5" width="15.5" height="11" fill="#e02030" stroke="#d8d8d8" stroke-width="1.3"/><path d="M5 15.5 h7 M8.5 12 v3" stroke="#d0d0d0" stroke-width="1.6"/></g>
<text x="1689.5" y="1182.5" font-size="7.5" font-weight="bold" fill="#fff" font-family="Liberation Sans,sans-serif">SC</text>
<g transform="translate(1712 1172)"><ellipse cx="6" cy="9" rx="6" ry="8.5" fill="#10307a"/><path d="M3 5.5 l6 6.5 l-3 3 v-12 l3 3 l-6 6.5" stroke="#fff" stroke-width="1.3" fill="none"/></g>
<g transform="translate(1734 1173)"><path d="M1.5 0 v16" stroke="#fff" stroke-width="1.6"/><path d="M3 1.5 q3 -1 5 0 t6 0 l-2 3 l2 3 q-3 1 -6 0 t-5 0z" fill="#fff"/></g>
<g transform="translate(1758 1173)"><path d="M1 14 h2 v1.5 h-2z M4.5 12 h2 v3.5 h-2z M8 9 h2 v6.5 h-2z M11.5 5 h2 v10.5 h-2z" fill="#fff"/><path d="M14.5 1 h1.5 v14.5 h-1.5z" fill="#fff"/></g>
<g transform="translate(1782 1173)"><path d="M1 5.5 h3 l4 -4 v13 l-4 -4 h-3z" fill="#fff"/><path d="M10 5 q2 3 0 6 M12.5 3 q3 5 0 10" stroke="#e8e8e8" stroke-width="1.1" fill="none"/></g>
<g transform="translate(1806 1173)"><path d="M5.5 1 h5 l5.5 9.5 h-5z" fill="#f8c020"/><path d="M5.5 1 l2.5 4.3 l-5.5 9.7 l-2.5 -4.5z" fill="#18a060"/><path d="M5.3 10.5 h10.7 l-2.5 4.5 h-11z" fill="#3878e0"/></g>
</svg>
<div class="t" id="t0" style="left:148.0px;top:7.0px;font-size:12px;letter-spacing:-0.754px;color:#101010">Файл</div>
<div class="t" id="t1" style="left:191.0px;top:7.0px;font-size:12px;letter-spacing:-0.341px;color:#101010">Правка</div>
<div class="t" id="t2" style="left:246.0px;top:7.0px;font-size:12px;letter-spacing:-0.573px;color:#101010">Вид</div>
<div class="t" id="t3" style="left:282.5px;top:7.0px;font-size:12px;letter-spacing:-0.658px;color:#101010">Вставка</div>
<div class="t" id="t4" style="left:339.0px;top:7.0px;font-size:12px;letter-spacing:-0.393px;color:#101010">Инструменты</div>
<div class="t" id="t5" style="left:426.0px;top:7.0px;font-size:12px;letter-spacing:0.152px;color:#101010">Окно</div>
<div class="t" id="t6" style="left:471.0px;top:7.0px;font-size:12px;letter-spacing:-0.368px;color:#101010">Справка</div>
<div class="t" id="t7" style="left:1192.0px;top:7.0px;font-size:11.5px;letter-spacing:-0.688px;color:#202020">ДЕТАЛЬ1 *</div>
<div class="t" id="t8" style="left:1590.5px;top:7.0px;font-size:12px;letter-spacing:-0.166px;color:#5a6478">Поиск в базе знаний</div>
<div class="t" id="t9" style="left:8.0px;top:60.6px;font-size:12px;letter-spacing:-0.180px;color:#101010;white-space:pre">Сборка</div>
<div class="t" id="t10" style="left:65.0px;top:60.6px;font-size:12px;letter-spacing:0.035px;color:#101010;white-space:pre">Расположение</div>
<div class="t" id="t11" style="left:167.0px;top:60.6px;font-size:12px;letter-spacing:-0.219px;color:#101010;white-space:pre">Эскиз</div>
<div class="t" id="t12" style="left:219.0px;top:60.6px;font-size:12px;letter-spacing:-0.075px;color:#101010;white-space:pre">Анализировать</div>
<div class="t" id="t13" style="left:319.0px;top:60.6px;font-size:12px;letter-spacing:-0.500px;color:#101010;white-space:pre">Добавления SOLIDWORKS</div>
<div class="t" id="t14" style="left:477.0px;top:60.6px;font-size:12px;letter-spacing:-0.073px;color:#101010;white-space:pre">SolidCAM Operations</div>
<div class="t" id="t15" style="left:606.7px;top:60.6px;font-size:12px;letter-spacing:-0.233px;color:#101010;white-space:pre">SolidCAM 2.5D</div>
<div class="t" id="t16" style="left:701.7px;top:60.6px;font-size:12px;letter-spacing:-0.187px;color:#101010;white-space:pre">SolidCAM AFRM</div>
<div class="t" id="t17" style="left:806.0px;top:60.6px;font-size:12px;letter-spacing:-0.212px;color:#101010;white-space:pre">SolidCAM 3D</div>
<div class="t" id="t18" style="left:891.7px;top:60.6px;font-size:12px;letter-spacing:-0.020px;color:#101010;white-space:pre">SolidCAM Multiaxis</div>
<div class="t" id="t19" style="left:1011.0px;top:60.6px;font-size:12px;letter-spacing:-0.125px;color:#101010;white-space:pre">Операция  SolidCAM</div>
<div class="t" id="t20" style="left:1140.7px;top:60.6px;font-size:12px;letter-spacing:-0.116px;color:#101010;white-space:pre">SolidCAM Переходы</div>
<div class="t" id="t21" style="left:1268.0px;top:60.6px;font-size:12px;letter-spacing:-0.225px;color:#101010;white-space:pre">SolidCAM 2.5D Переходы</div>
<div class="t" id="t22" style="left:1420.7px;top:60.6px;font-size:12px;letter-spacing:-0.203px;color:#101010;white-space:pre">SolidCAM 3D Переходы</div>
<div class="t" id="t23" style="left:1565.0px;top:60.6px;font-size:12px;letter-spacing:-0.259px;font-weight:bold;color:#101010">SOLIDWORKS MBD</div>
<div class="t" id="t24" style="left:50.4px;top:114.3px;font-size:11px;letter-spacing:-0.224px;">Операция (ДЕТАЛЬ1)</div>
<div class="t" id="t25" style="left:73.3px;top:132.3px;font-size:11px;letter-spacing:-0.085px;">Станок (gMilling_3x)</div>
<div class="t" id="t26" style="left:73.3px;top:150.3px;font-size:11px;letter-spacing:-0.028px;">Менеджер Ноля детали</div>
<div class="t" id="t27" style="left:73.3px;top:168.3px;font-size:11px;letter-spacing:0.128px;">Заготовка (stock)</div>
<div class="t" id="t28" style="left:74.0px;top:186.3px;font-size:11px;letter-spacing:0.206px;">Деталь (target)</div>
<div class="t" id="t29" style="left:74.0px;top:204.3px;font-size:11px;letter-spacing:0.135px;">Установки</div>
<div class="t" id="t30" style="left:50.4px;top:222.3px;font-size:11px;letter-spacing:-0.129px;">Инструмент</div>
<div class="t" id="t31" style="left:50.4px;top:240.3px;font-size:11px;letter-spacing:-0.173px;">ТехПроцесс (F)</div>
<div class="t" id="t32" style="left:51.0px;top:258.3px;font-size:11px;letter-spacing:-0.135px;">Геометрии</div>
<div class="t" id="t33" style="left:50.4px;top:276.3px;font-size:11px;letter-spacing:-0.255px;">Приспособление</div>
<div class="t" id="t34" style="left:69.0px;top:294.3px;font-size:11px;letter-spacing:0.024px;color:#fff">Переходы</div>
<div class="t" id="t35" style="left:396.4px;top:281.2px;font-size:12px;letter-spacing:-0.170px;">SolidCAM</div>
<div class="t" id="t36" style="left:426.4px;top:317.0px;font-size:11px;letter-spacing:-0.032px;">The geometry is not suitable for the chosen Toolbox sub-oeration</div>
<div class="t" id="t37" style="left:605.0px;top:353.5px;font-size:11px;letter-spacing:-1.203px;">OK</div>
<div class="t" id="t38" style="left:104.0px;top:1125.0px;font-size:12px;letter-spacing:-0.245px;font-weight:bold">Модель</div>
<div class="t" id="t39" style="left:172.0px;top:1125.0px;font-size:12px;letter-spacing:-0.108px;">Трехмерные виды</div>
<div class="t" id="t40" style="left:300.0px;top:1125.0px;font-size:12px;letter-spacing:-0.200px;">Исследование движения 1</div>
<div class="t" id="t41" style="left:2.0px;top:1143.5px;font-size:12px;letter-spacing:-0.441px;">SOLIDWORKS Premium 2015 x64 Edition</div>
<div class="t" id="t42" style="left:1369.0px;top:1143.5px;font-size:12px;letter-spacing:-0.060px;">Длина: 37мм</div>
<div class="t" id="t43" style="left:1451.7px;top:1143.5px;font-size:12px;letter-spacing:-0.096px;">Определенный</div>
<div class="t" id="t44" style="left:1553.3px;top:1143.5px;font-size:12px;letter-spacing:-0.185px;">Редактируется Сборка</div>
<div class="t" id="t45" style="left:1728.3px;top:1143.5px;font-size:12px;letter-spacing:-0.075px;">Настройка</div>
<div class="t" id="t46" style="left:1853.3px;top:1164.7px;font-size:12px;letter-spacing:-0.666px;color:#fff">19:48</div>
<div class="t" id="t47" style="left:1840.0px;top:1182.0px;font-size:12px;letter-spacing:-0.676px;color:#fff">27.09.2015</div>
</body></html>
